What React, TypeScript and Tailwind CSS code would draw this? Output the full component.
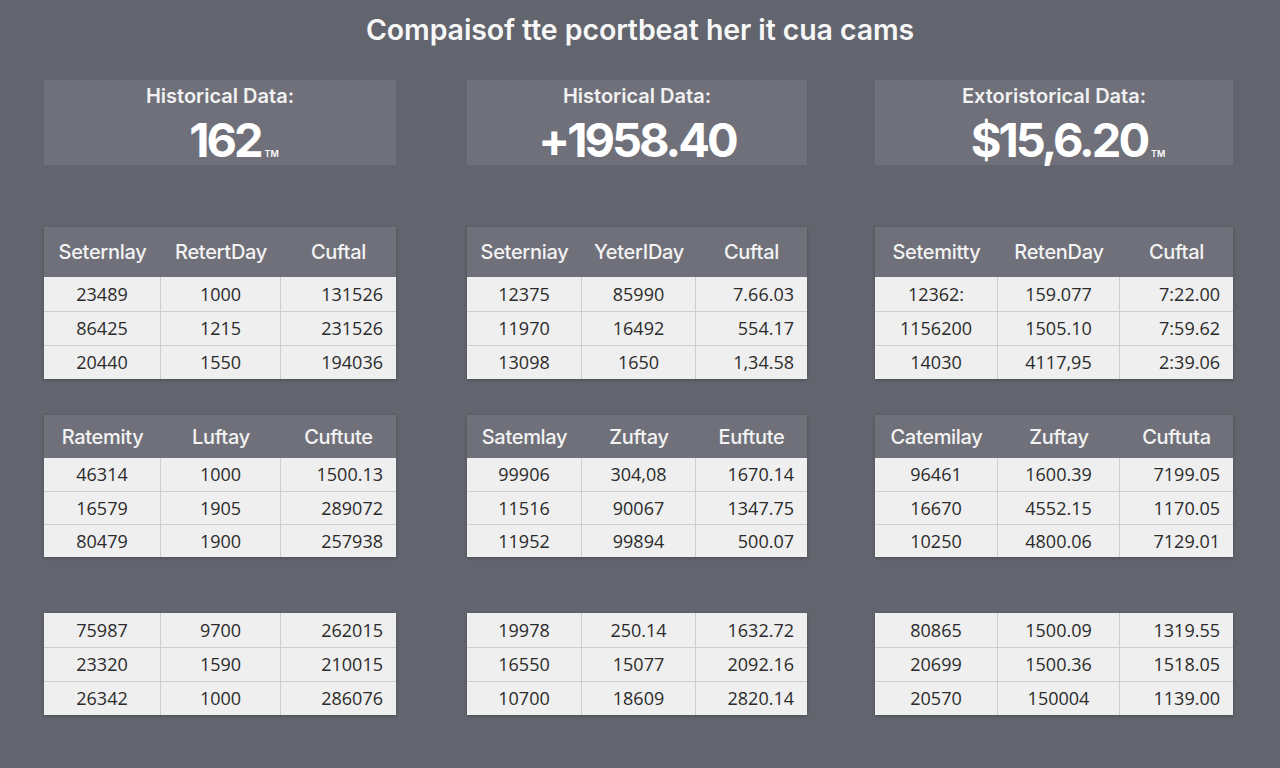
import React from 'react';

type Table = {
  headers?: string[];
  headH?: string;
  rowH: string;
  rows: string[][];
};

type Column = {
  width: string;
  cols: string;
  label: string;
  value: string;
  suffix?: string;
  tables: Table[];
};

const columns: Column[] = [
  {
    width: 'w-[352px]',
    cols: 'grid-cols-[117px_120px_1fr]',
    label: 'Historical Data:',
    value: '162',
    suffix: 'TM',
    tables: [
      {
        headers: ['Seternlay', 'RetertDay', 'Cuftal'],
        headH: 'h-[50px]',
        rowH: 'h-[34px]',
        rows: [
          ['23489', '1000', '131526'],
          ['86425', '1215', '231526'],
          ['20440', '1550', '194036'],
        ],
      },
      {
        headers: ['Ratemity', 'Luftay', 'Cuftute'],
        headH: 'h-[43px]',
        rowH: 'h-[33px]',
        rows: [
          ['46314', '1000', '1500.13'],
          ['16579', '1905', '289072'],
          ['80479', '1900', '257938'],
        ],
      },
      {
        rowH: 'h-[34px]',
        rows: [
          ['75987', '9700', '262015'],
          ['23320', '1590', '210015'],
          ['26342', '1000', '286076'],
        ],
      },
    ],
  },
  {
    width: 'w-[340px]',
    cols: 'grid-cols-[115px_114px_1fr]',
    label: 'Historical Data:',
    value: '+1958.40',
    tables: [
      {
        headers: ['Seterniay', 'YeterIDay', 'Cuftal'],
        headH: 'h-[50px]',
        rowH: 'h-[34px]',
        rows: [
          ['12375', '85990', '7.66.03'],
          ['11970', '16492', '554.17'],
          ['13098', '1650', '1,34.58'],
        ],
      },
      {
        headers: ['Satemlay', 'Zuftay', 'Euftute'],
        headH: 'h-[43px]',
        rowH: 'h-[33px]',
        rows: [
          ['99906', '304,08', '1670.14'],
          ['11516', '90067', '1347.75'],
          ['11952', '99894', '500.07'],
        ],
      },
      {
        rowH: 'h-[34px]',
        rows: [
          ['19978', '250.14', '1632.72'],
          ['16550', '15077', '2092.16'],
          ['10700', '18609', '2820.14'],
        ],
      },
    ],
  },
  {
    width: 'w-[358px]',
    cols: 'grid-cols-[123px_122px_1fr]',
    label: 'Extoristorical Data:',
    value: '$15,6.20',
    suffix: 'TM',
    tables: [
      {
        headers: ['Setemitty', 'RetenDay', 'Cuftal'],
        headH: 'h-[50px]',
        rowH: 'h-[34px]',
        rows: [
          ['12362:', '159.077', '7:22.00'],
          ['1156200', '1505.10', '7:59.62'],
          ['14030', '4117,95', '2:39.06'],
        ],
      },
      {
        headers: ['Catemilay', 'Zuftay', 'Cuftuta'],
        headH: 'h-[43px]',
        rowH: 'h-[33px]',
        rows: [
          ['96461', '1600.39', '7199.05'],
          ['16670', '4552.15', '1170.05'],
          ['10250', '4800.06', '7129.01'],
        ],
      },
      {
        rowH: 'h-[34px]',
        rows: [
          ['80865', '1500.09', '1319.55'],
          ['20699', '1500.36', '1518.05'],
          ['20570', '150004', '1139.00'],
        ],
      },
    ],
  },
];

const tableGaps = ['mt-[62px]', 'mt-[36px]', 'mt-[56px]'];

function DataTable({ table, cols }: { table: Table; cols: string }) {
  return (
    <div className="shadow-[0_1px_3px_rgba(0,0,0,0.25)]">
      {table.headers && (
        <div
          className={`grid ${cols} ${table.headH} bg-[#6f7079] text-[20px] font-medium text-[#f3f3f3] tracking-[-0.3px]`}
          style={{ fontFamily: 'Inter, "Liberation Sans", sans-serif' }}
        >
          {table.headers.map((h, i) => (
            <div key={i} className="flex items-center justify-center">
              {h}
            </div>
          ))}
        </div>
      )}
      <div className="bg-[#efefef]">
        {table.rows.map((row, r) => (
          <div
            key={r}
            className={`grid ${cols} ${table.rowH} ${r > 0 ? 'border-t border-[#cfcfcf]' : ''}`}
          >
            {row.map((cell, c) => (
              <div
                key={c}
                className={`flex items-center text-[18px] text-[#2b2b2b] ${
                  c === 2 ? 'justify-end pr-[13px]' : 'justify-center border-r border-[#cfcfcf]'
                }`}
              >
                {cell}
              </div>
            ))}
          </div>
        ))}
      </div>
    </div>
  );
}

export default function App() {
  return (
    <div
      className="h-[768px] w-[1280px] overflow-hidden bg-[#63656e]"
      style={{ fontFamily: '"Open Sans", Roboto, "Liberation Sans", sans-serif' }}
    >
      <h1
        className="pt-[11px] h-[80px] text-center text-[28.5px] leading-[38px] font-semibold text-[#f7f7f7] tracking-[-0.1px]"
        style={{ fontFamily: 'Inter, "Liberation Sans", sans-serif' }}
      >
        Compaisof tte pcortbeat her it cua cams
      </h1>

      <div className="flex pl-[44px]">
        {columns.map((col, i) => (
          <div key={i} className={`${col.width} ${i === 1 ? 'ml-[71px]' : i === 2 ? 'ml-[68px]' : ''}`}>
            <div
              className="h-[85px] bg-[#6f7079] flex flex-col items-center pt-[4px]"
              style={{ fontFamily: 'Inter, "Liberation Sans", sans-serif' }}
            >
              <div className="text-[20px] leading-[24px] font-semibold text-[#f2f2f2]">
                {col.label}
              </div>
              <div
                className={`mt-[6px] flex items-baseline text-[47px] leading-[52px] font-bold text-white tracking-[-3px] ${
                  col.suffix ? 'pl-[28px]' : ''
                }`}
              >
                {col.value}
                {col.suffix && (
                  <span className="ml-[4px] text-[9px] font-semibold tracking-normal">{col.suffix}</span>
                )}
              </div>
            </div>
            {col.tables.map((t, j) => (
              <div key={j} className={tableGaps[j]}>
                <DataTable table={t} cols={col.cols} />
              </div>
            ))}
          </div>
        ))}
      </div>
    </div>
  );
}
